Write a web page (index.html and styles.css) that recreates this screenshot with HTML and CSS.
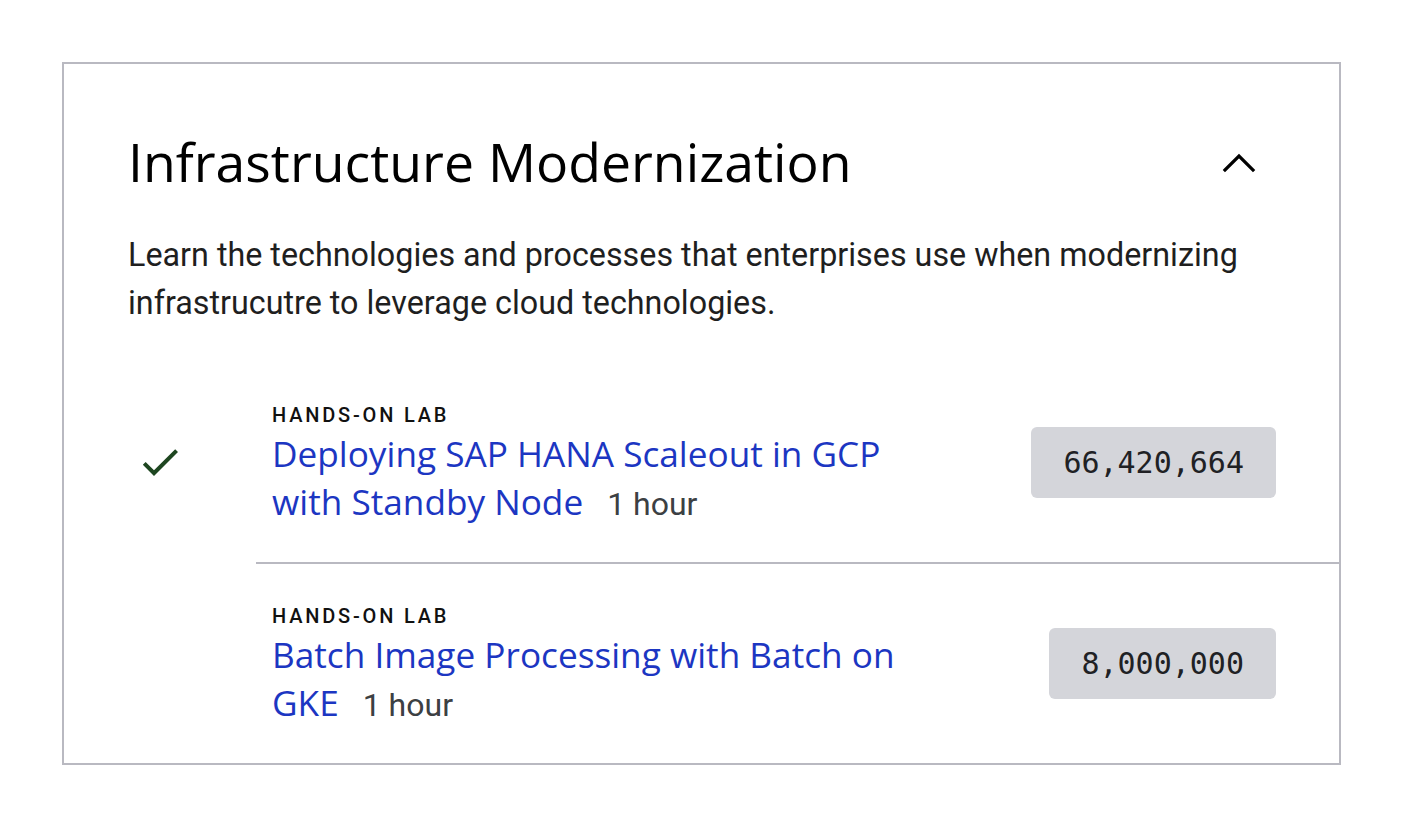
FILE: index.html
```html
<!DOCTYPE html>
<html>
<head>
<meta charset="utf-8">
<link rel="stylesheet" href="styles.css">
</head>
<body>
<section class="card">
  <div class="header">
    <h2 class="title">Infrastructure Modernization</h2>
    <button class="toggle" aria-label="Collapse">
      <svg width="40" height="24" viewBox="0 0 40 24"><polyline points="6,20 20,6 34,20" fill="none" stroke="#000" stroke-width="3.2" stroke-linecap="square"/></svg>
    </button>
  </div>
  <p class="desc">Learn the technologies and processes that enterprises use when modernizing infrastrucutre to leverage cloud technologies.</p>
  <ul class="list">
    <li class="item">
      <div class="status">
        <svg width="48" height="48" viewBox="0 0 24 24"><path d="M9 16.17 4.83 12l-1.42 1.41L9 19 21 7l-1.41-1.41z" fill="#1e4620"/></svg>
      </div>
      <div class="content">
        <div class="info">
          <div class="kind">HANDS-ON LAB</div>
          <div class="name"><a class="link" href="#">Deploying SAP HANA Scaleout in GCP with Standby Node</a><span class="dur">1 hour</span></div>
        </div>
        <span class="badge">66,420,664</span>
      </div>
    </li>
    <li class="item">
      <div class="status"></div>
      <div class="content last">
        <div class="info">
          <div class="kind">HANDS-ON LAB</div>
          <div class="name"><a class="link" href="#">Batch Image Processing with Batch on GKE</a><span class="dur">1 hour</span></div>
        </div>
        <span class="badge">8,000,000</span>
      </div>
    </li>
  </ul>
</section>
</body>
</html>
```
FILE: styles.css
```css
* { box-sizing: border-box; }
html, body { margin: 0; padding: 0; background: #fff; }
body { padding: 62px 0 0 62px; font-family: Roboto, "Liberation Sans", sans-serif; color: #202124; }
.card {
  width: 1279px;
  height: 703px;
  border: 2px solid #b9b9c1;
  overflow: hidden;
}
.header {
  display: flex;
  align-items: center;
  justify-content: space-between;
  padding: 66px 80px 0 64px;
}
.title {
  margin: 0;
  font-family: "Open Sans", sans-serif;
  font-weight: 400;
  font-size: 53.5px;
  line-height: 64px;
  color: #000;
}
.toggle {
  border: 0;
  background: none;
  padding: 0;
  display: flex;
}
.desc {
  margin: 37px 0 0 0;
  padding: 0 64px;
  font-size: 32.3px;
  line-height: 48px;
  color: #1f1f1f;
}
.list { list-style: none; margin: 58px 0 0 0; padding: 0 0 0 64px; }
.item { display: flex; }
.status { width: 128px; flex: none; padding: 53px 0 0 8px; }
.content {
  flex: 1;
  display: flex;
  align-items: flex-start;
  justify-content: space-between;
  padding: 18px 63px 35px 16px;
  border-bottom: 2px solid #b9b9c1;
}
.content.last { border-bottom: 0; padding-top: 40px; }
.info { width: 650px; }
.kind {
  font-size: 20px;
  font-weight: 500;
  letter-spacing: 2.8px;
  line-height: 24px;
  color: #111;
}
.name { font-size: 34px; line-height: 48px; margin-top: 4px; }
.link {
  font-family: "Open Sans", sans-serif;
  font-size: 35.2px;
  line-height: 1;
  color: #1c36c2;
  text-decoration: none;
  margin-right: 24px;
}
.dur { font-size: 32px; line-height: 1; color: #3c4043; }
.badge {
  background: #d4d5da;
  border-radius: 6px;
  font-family: "DejaVu Sans Mono", monospace;
  font-size: 30px;
  line-height: 71px;
  padding: 0 32px;
  color: #202124;
  margin-top: 24px;
}
```
